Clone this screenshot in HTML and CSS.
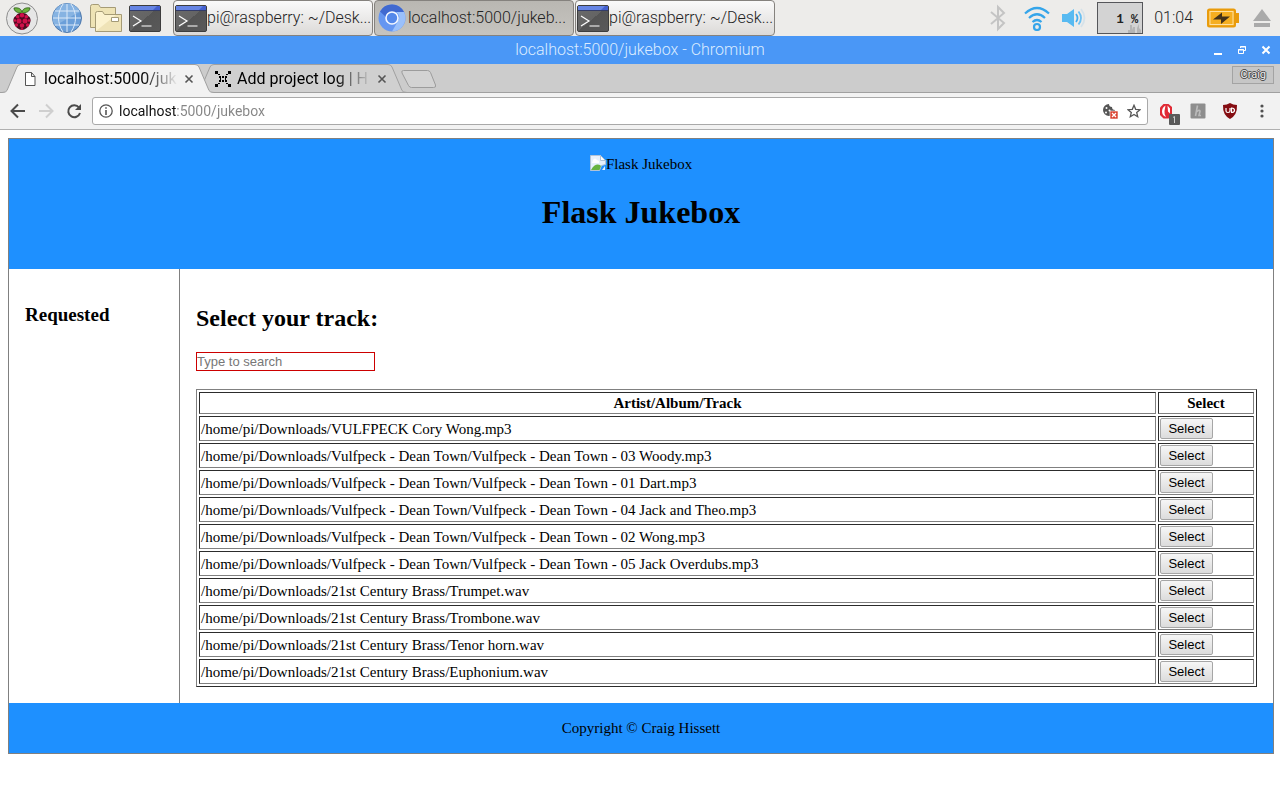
FILE: index.html
```html
<!DOCTYPE html>
<html lang="en">
<head>
<meta charset="utf-8">
<title>Flask Jukebox</title>
<link rel="stylesheet" href="styles.css">
</head>
<body>
<svg class="defs" aria-hidden="true">
  <defs>
    <linearGradient id="shine" x1="0" y1="0" x2="1" y2="1">
      <stop offset="0" stop-color="#6b6b6b"/><stop offset=".5" stop-color="#646464"/><stop offset=".5" stop-color="#545454"/><stop offset="1" stop-color="#595959"/>
    </linearGradient>
    <symbol id="terminal" viewBox="0 0 32 28">
      <rect x=".5" y="1.500" width="31" height="26" rx="1.500" fill="url(#shine)" stroke="#3d3d3d"/>
      <path d="M1 2h30v4H1z" fill="#4460cf"/><path d="M1 2h27l-4 4H1z" fill="#6685e4"/>
      <path d="M1 6.500h30" stroke="#333c68"/>
      <path d="M4 12l8 5-8 5M12.500 22h10" fill="none" stroke="#fff" stroke-width="1.200"/>
    </symbol>
    <symbol id="cross" viewBox="0 0 10 10"><path d="M1.500 1.500l7 7M8.500 1.500l-7 7" stroke="currentColor" stroke-width="1.600"/></symbol>
  </defs>
</svg>

<div class="taskbar">
  <nav class="launchers" aria-label="Launchers">
    <button class="launcher menu" aria-label="Menu">
      <svg width="34" height="34" viewBox="0 0 34 34">
        <circle cx="17" cy="17.500" r="15.500" fill="#e6e6e6" stroke="#8e8e8e"/>
        <path d="M16.500 12C12 12 9 10 9 7c3-.6 7 0 8 4 1-4 5-4.600 8-4 0 3-3 5-8.500 5z" fill="#6cb33e" stroke="#2d5a1b" stroke-width=".8"/>
        <path d="M17 12c4 0 5 1 6 3 3 1 3 5 2 7-1 4-5 7-8 7s-7-3-8-7c-1-2-1-6 2-7 1-2 2-3 6-3z" fill="#4e0b20"/>
        <g fill="#d0114b"><circle cx="17" cy="14.200" r="2.200"/><circle cx="12.700" cy="15.700" r="1.800"/><circle cx="21.300" cy="15.700" r="1.800"/><circle cx="14" cy="20" r="2.500"/><circle cx="20" cy="20" r="2.500"/><circle cx="10" cy="19.500" r="1.300"/><circle cx="24" cy="19.500" r="1.300"/><circle cx="11.500" cy="24" r="1.700"/><circle cx="22.500" cy="24" r="1.700"/><circle cx="17" cy="24.500" r="2.200"/><circle cx="17" cy="28" r="1.100"/></g>
      </svg>
    </button>
    <button class="launcher" aria-label="Web browser">
      <svg width="32" height="32" viewBox="0 0 32 32">
        <circle cx="16" cy="16" r="14.500" fill="#6b9fd9" stroke="#5079ab"/>
        <path d="M5 7A14 14 0 0 1 29 10C22 13 14 18 4 24A14 14 0 0 1 5 7z" fill="#86b3e2"/>
        <path d="M16 2v28M2 16h28M4 9h24M4 23h24M12 2c-6 9-6 19 0 28M20 2c6 9 6 19 0 28" fill="none" stroke="#dbe9f8"/>
      </svg>
    </button>
    <button class="launcher" aria-label="File manager">
      <svg width="32" height="30" viewBox="0 0 32 30">
        <path d="M.5 24.500V3.500q0-2 2-2h6l2 3h15v20z" fill="#eee3b5" stroke="#a59b76"/>
        <path d="M5.500 28.500v-18q0-2 2-2h5l2 3h17v17z" fill="#fbf2cf" stroke="#a59b76"/>
        <path d="M6 28l20-16h5v16z" fill="#efe3b7"/>
        <path d="M21.500 14.500h7v4h-7z" fill="#fff" stroke="#a39a77"/>
      </svg>
    </button>
    <button class="launcher" aria-label="Terminal"><svg width="32" height="28"><use href="#terminal"/></svg></button>
  </nav>
  <div class="tasks">
    <button class="task"><svg width="32" height="28"><use href="#terminal"/></svg><span>pi@raspberry: ~/Desk...</span></button>
    <button class="task current">
      <svg width="32" height="30" viewBox="0 0 32 30">
        <circle cx="16" cy="15" r="13.500" fill="#6596f1"/>
        <path d="M4 8.500A13.500 13.500 0 0 1 28 9H16a6 6 0 0 0-6 5z" fill="#4069d0"/>
        <path d="M28 9a13.500 13.500 0 0 1-12 19.500l6-10.500a6 6 0 0 0-2-9z" fill="#9ac0fb"/>
        <circle cx="16" cy="15" r="6" fill="#5488ea" stroke="#f5f8ff" stroke-width="1.600"/>
      </svg><span>localhost:5000/jukeb...</span>
    </button>
    <button class="task"><svg width="32" height="28"><use href="#terminal"/></svg><span>pi@raspberry: ~/Desk...</span></button>
  </div>
  <div class="tray">
    <svg class="bluetooth" width="18" height="28" viewBox="0 0 18 28" fill="none" stroke="#c4c4c4" stroke-width="2"><path d="M2 8l13 11-6 6V3l6 6L2 20"/></svg>
    <svg width="28" height="26" viewBox="0 0 28 26" fill="none" stroke="#35a5ea" stroke-width="2.200"><path d="M2 8.500q12-11 24 0M6 13q8-7.500 16 0M9.500 17q4.500-4 9 0"/><circle cx="14" cy="22" r="3"/></svg>
    <svg class="volume" width="26" height="22" viewBox="0 0 26 22" fill="none" stroke-width="1.800"><path d="M2 7h5l7-5v18l-7-5H2z" fill="#58baf1"/><path d="M16 7q3 4 0 8" stroke="#43adef"/><path d="M18.500 4.500q5 6.500 0 13" stroke="#6bc0f3"/><path d="M21 2q7 9 0 18" stroke="#d5e2ea"/></svg>
    <div class="cpu"><svg width="14" height="10" viewBox="0 0 14 10"><path d="M0 10V7h2V2h2v5l1-3h2v6zM9 10V5l2-4v4l2 2v3z" fill="#b5b5b5"/></svg><span>1 %</span></div>
    <time class="clock">01:04</time>
    <svg width="32" height="20" viewBox="0 0 32 20"><rect x="1" y="1.500" width="27" height="17" rx="1.500" fill="#f5ae20" stroke="#e99b0b" stroke-width="2"/><path d="M29 5h3v10h-3z" fill="#e99b0b"/><rect x="3" y="3.500" width="23" height="13" fill="none" stroke="#ffe0a0"/><path d="M6 11.500l9-7v4h8l-9 7.500v-4.500z" fill="#443218"/></svg>
    <svg class="eject" width="18" height="18" viewBox="0 0 18 18" fill="#aaa"><path d="M9 0l9 12H0zM1 14h16v4H1z"/></svg>
  </div>
</div>

<div class="titlebar">
  <span class="window-title">localhost:5000/jukebox - Chromium</span>
  <div class="window-buttons">
    <button aria-label="Minimise"><svg width="10" height="10"><path d="M1 8h8v2H1z" fill="#fff"/></svg></button>
    <button aria-label="Restore"><svg width="10" height="10" fill="none" stroke="#fff"><path d="M3.500 3V1.500h5v4H7M3 2h6M1.500 4.500h5v4h-5zM1 5h6"/></svg></button>
    <button aria-label="Close"><svg width="10" height="10"><path d="M1.500 1.500l7 7M8.500 1.500l-7 7" stroke="#fff" stroke-width="2"/></svg></button>
  </div>
</div>

<div class="tabstrip">
  <div class="tab active">
    <svg class="tab-shape" viewBox="0 0 212 29"><path d="M0 28.500q4 0 5-2L15 3q1-2.500 4-2.500h174q3 0 4 2.500l10 23.500q1 2 5 2V29H0z" fill="#f2f2f2"/><path d="M0 28.500q4 0 5-2L15 3q1-2.500 4-2.500h174q3 0 4 2.500l10 23.500q1 2 5 2" fill="none" stroke="#a0a0a0"/></svg>
    <svg width="12" height="14" viewBox="0 0 12 14"><path d="M1.500.5h6l3.500 4v9H1.500zM7.500.5v4H11" fill="#fff" stroke="#555"/></svg>
    <span class="tab-title">localhost:5000/juk</span>
    <button class="tab-close" aria-label="Close tab"><svg width="10" height="10"><use href="#cross"/></svg></button>
  </div>
  <div class="tab">
    <svg class="tab-shape" viewBox="0 0 212 29"><path d="M0 28.500q4 0 5-2L15 3q1-2.500 4-2.500h174q3 0 4 2.500l10 23.500q1 2 5 2z" fill="#d0d0d0" stroke="#a0a0a0"/></svg>
    <svg width="16" height="16" viewBox="0 0 16 16"><path d="M0 0h3v3H0zM13 0h3v3h-3zM0 13h3v3H0zM13 13h3v3h-3zM3 3h2v1H3zM11 3h2v1h-2zM3 12h2v1H3zM11 12h2v1h-2zM4 5h2v2H4zM7 5h2v2H7zM10 5h2v2h-2zM4 9h2v2H4zM7 9h2v2H7zM10 9h2v2h-2zM5 7h1v2H5zM10 7h1v2h-1z"/></svg>
    <span class="tab-title">Add project log | H</span>
    <button class="tab-close" aria-label="Close tab"><svg width="10" height="10"><use href="#cross"/></svg></button>
  </div>
  <button class="new-tab" aria-label="New tab"><svg width="36" height="18"><path d="M2.500.5h24q2 0 3 2l5 12.500q1 2.500-2 2.500h-22q-2 0-3-2L1 3Q0 .5 2.500.5z" fill="#d3d3d3" stroke="#9c9c9c"/></svg></button>
  <button class="profile">Craig</button>
</div>

<div class="toolbar">
  <button aria-label="Back"><svg width="16" height="16" fill="none" stroke="#4b4b4b" stroke-width="2"><path d="M15 8H2M8 1.500L1.500 8 8 14.500"/></svg></button>
  <button aria-label="Forward" disabled><svg width="16" height="16" fill="none" stroke="#cfcfcf" stroke-width="2"><path d="M1 8h13M8 1.500L14.500 8 8 14.500"/></svg></button>
  <button aria-label="Reload"><svg width="16" height="16"><path d="M13 4.500A6 6 0 1 0 14 10" fill="none" stroke="#4b4b4b" stroke-width="2"/><path d="M15 1v6H9z" fill="#4b4b4b"/></svg></button>
  <div class="omnibox">
    <svg width="14" height="14"><circle cx="7" cy="7" r="6.200" fill="none" stroke="#555" stroke-width="1.300"/><path d="M6.200 3.200h1.600v1.600H6.200zM6.200 6h1.600v5H6.200z" fill="#555"/></svg>
    <input class="address" type="text" aria-label="Address" value="localhost:5000/jukebox" spellcheck="false">
    <button aria-label="Cookies blocked"><svg width="16" height="16"><path d="M7 1q0 3 3 3 0 3 3 3A6 6 0 1 1 7 1z" fill="#555"/><g fill="#fff"><circle cx="4.500" cy="5" r="1"/><circle cx="7.500" cy="7.500" r="1"/><circle cx="4" cy="9.500" r="1"/></g><rect x="8" y="8" width="8" height="8" fill="#d9422f" stroke="#fff" stroke-width=".6"/><path d="M10 10l4 4M14 10l-4 4" stroke="#fff" stroke-width="1.300"/></svg></button>
    <button aria-label="Bookmark"><svg width="14" height="14" viewBox="0 0 14 14"><path d="M7 1.300l1.700 4 4.300.4-3.300 2.800 1 4.200L7 10.500l-3.700 2.200 1-4.200L1 5.700l4.300-.4z" fill="none" stroke="#555" stroke-width="1.300"/></svg></button>
  </div>
  <div class="extensions">
    <button class="blocker" aria-label="Blocker"><svg width="22" height="22"><path d="M5.500 1h5L14 4v8l-3.500 3.500h-5L2 12V4.500z" fill="#e02a35"/><path d="M7.500 2.500q-3.500 2-3.500 6 0 4 4 5.500-2-3-1.500-6zM9.500 2.500l.5 6 2 2V5.500z" fill="#fff"/><rect x="11" y="11" width="11" height="11" rx="1" fill="#5a5a5a"/><path d="M15 14.500l1.500-1V20" fill="none" stroke="#ccc"/></svg></button>
    <button aria-label="Honey"><svg width="16" height="16"><rect width="15" height="15" x=".5" y=".5" rx="1" fill="#8e8e8e"/><path d="M7.500 2.500L5.500 13M6 9.500q4-4 4-1L9 12.500h2" fill="none" stroke="#bbb" stroke-width="1.600"/></svg></button>
    <button aria-label="uBlock"><svg width="16" height="16"><path d="M8 0q3 2 7 2 .5 10-7 14Q.5 12 1 2q4 0 7-2z" fill="#850d12"/><path d="M4 5v3q0 1.500 2 1.500T8 8V5M9.500 5v4.500q3 0 3-2.200T9.500 5z" fill="none" stroke="#fff" stroke-width="1.200"/></svg></button>
    <button class="more" aria-label="Browser menu"><svg width="4" height="14" fill="#505050"><circle cx="2" cy="2" r="1.600"/><circle cx="2" cy="7" r="1.600"/><circle cx="2" cy="12" r="1.600"/></svg></button>
  </div>
</div>

<div class="container">
  <header class="banner">
    <span class="logo"><svg width="16" height="16" viewBox="0 0 16 16"><path d="M.5.500h10l5 5v4l-4 1-2 5h-9z" fill="#e6f0fc" stroke="#b2c3d6"/><path d="M10.500.5v5h5z" fill="#fff" stroke="#b2c3d6"/><path d="M3 5q2-3 4 0l2 1v2H2z" fill="#fff"/><path d="M1 15q4-7 9-5l1 1-1.500 4z" fill="#67b33f"/><path d="M12 15l3-4v4z" fill="#e6f0fc"/></svg><span>Flask Jukebox</span></span>
    <h1>Flask Jukebox</h1>
  </header>
  <div class="columns">
    <aside class="requested"><h3>Requested</h3></aside>
    <main class="content">
      <h2>Select your track:</h2>
      <input class="search" type="text" placeholder="Type to search" aria-label="Type to search">
      <table class="tracks">
        <thead><tr><th>Artist/Album/Track</th><th class="pick">Select</th></tr></thead>
        <tbody>
          <tr><td>/home/pi/Downloads/VULFPECK Cory Wong.mp3</td><td><button class="select">Select</button></td></tr>
          <tr><td>/home/pi/Downloads/Vulfpeck - Dean Town/Vulfpeck - Dean Town - 03 Woody.mp3</td><td><button class="select">Select</button></td></tr>
          <tr><td>/home/pi/Downloads/Vulfpeck - Dean Town/Vulfpeck - Dean Town - 01 Dart.mp3</td><td><button class="select">Select</button></td></tr>
          <tr><td>/home/pi/Downloads/Vulfpeck - Dean Town/Vulfpeck - Dean Town - 04 Jack and Theo.mp3</td><td><button class="select">Select</button></td></tr>
          <tr><td>/home/pi/Downloads/Vulfpeck - Dean Town/Vulfpeck - Dean Town - 02 Wong.mp3</td><td><button class="select">Select</button></td></tr>
          <tr><td>/home/pi/Downloads/Vulfpeck - Dean Town/Vulfpeck - Dean Town - 05 Jack Overdubs.mp3</td><td><button class="select">Select</button></td></tr>
          <tr><td>/home/pi/Downloads/21st Century Brass/Trumpet.wav</td><td><button class="select">Select</button></td></tr>
          <tr><td>/home/pi/Downloads/21st Century Brass/Trombone.wav</td><td><button class="select">Select</button></td></tr>
          <tr><td>/home/pi/Downloads/21st Century Brass/Tenor horn.wav</td><td><button class="select">Select</button></td></tr>
          <tr><td>/home/pi/Downloads/21st Century Brass/Euphonium.wav</td><td><button class="select">Select</button></td></tr>
        </tbody>
      </table>
    </main>
  </div>
  <footer class="footer">Copyright © Craig Hissett</footer>
</div>
</body>
</html>
```
FILE: styles.css
```css
* { box-sizing: border-box; }
body {
  margin: 0;
  background: #fff;
  color: #000;
  font: 15px/18px "Liberation Serif", serif;
}
button {
  margin: 0;
  padding: 0;
  border: 0;
  background: none;
  color: inherit;
  font: inherit;
}
svg { display: block; flex: none; }
.defs { position: absolute; width: 0; height: 0; }

/* Desktop panel */
.taskbar {
  display: flex;
  align-items: center;
  height: 36px;
  padding: 0 9px 0 5px;
  background: #edecea;
  font: 300 16px/20px Roboto, sans-serif;
}
.launchers { display: flex; align-items: center; gap: 7px; }
.menu { margin-right: 5px; }
.tasks { display: flex; gap: 1px; margin-left: 12px; }
.task {
  display: flex;
  align-items: center;
  width: 200px;
  height: 36px;
  padding: 0 1px;
  border: 1px solid #85827e;
  border-radius: 4px;
  background: linear-gradient(#fafafa, #dcdad8);
  color: #222;
  white-space: nowrap;
}
.task.current { background: linear-gradient(#b9b7b2, #c6c4bf); }
.tray { display: flex; align-items: center; gap: 11px; margin-left: auto; color: #222; }
.bluetooth { margin-right: 5px; }
.volume { margin-left: -2px; }
.cpu {
  position: relative;
  width: 46px;
  height: 32px;
  padding: 8px 4px 0 0;
  border: 1px solid #55565a;
  background: #d3d3d3;
  font: bold 12px/18px "Liberation Mono", monospace;
  text-align: right;
}
.cpu svg { position: absolute; right: 0; bottom: 0; }
.cpu span { position: relative; }
.clock { margin-right: 3px; }
.eject { margin-left: 3px; }

/* Window frame */
.titlebar {
  display: grid;
  grid-template-columns: 1fr auto 1fr;
  align-items: center;
  height: 28px;
  padding: 0 9px;
  background: #4a97f6;
  color: #dcecff;
  font: 300 16px/20px Roboto, sans-serif;
}
.window-title { grid-column: 2; }
.window-buttons { display: flex; justify-content: flex-end; gap: 14px; }

.tabstrip {
  display: flex;
  height: 29px;
  padding: 0 6px 0 2px;
  background: #ccc;
  box-shadow: inset 0 -1px #a0a0a0;
  font: 16px/20px Roboto, sans-serif;
}
.tab {
  position: relative;
  display: flex;
  align-items: center;
  width: 212px;
  margin-right: -19px;
  padding: 0 20px;
  isolation: isolate;
}
.tab.active { z-index: 1; padding-left: 22px; }
.tab-shape { position: absolute; inset: 0; z-index: -1; width: 100%; height: 100%; }
.tab-title {
  flex: 1;
  margin: 0 6px;
  white-space: nowrap;
  mask-image: linear-gradient(to left, transparent, #000 36px);
}
.active .tab-title { margin-left: 8px; }
.tab-close { color: #555; }
.new-tab { align-self: center; margin-left: 13px; }
.profile {
  align-self: flex-start;
  height: 18px;
  margin: 2px 0 0 auto;
  padding: 0 7px;
  border: 1px solid #a3a3a3;
  background: #c6c6c6;
  color: #eee;
  font: 11px/16px Roboto, sans-serif;
  text-shadow: 1px 0 #444, -1px 0 #444, 0 1px #444, 0 -1px #444;
}

.toolbar {
  display: flex;
  align-items: center;
  gap: 12px;
  height: 37px;
  padding: 0 16px 0 10px;
  border-bottom: 1px solid #b0b0b0;
  background: #f2f2f2;
}
.omnibox {
  display: flex;
  flex: 1;
  align-items: center;
  gap: 6px;
  height: 28px;
  margin-left: -2px;
  padding: 0 6px;
  border: 1px solid #a9a9a9;
  border-radius: 3px;
  background: #fff;
}
.address {
  flex: 1;
  min-width: 0;
  padding: 0;
  border: 0;
  background: linear-gradient(to right, #111 58px, #858585 58px) text;
  color: transparent;
  font: 14px/20px Roboto, sans-serif;
}
.omnibox button + button { margin-left: 3px; }
.extensions { display: flex; align-items: center; gap: 16px; margin-left: -2px; }
.blocker { margin: 6px -6px 0 0; }
.more { margin-left: 6px; }

/* Jukebox page */
.container { margin: 8px 6px 8px 8px; border: 1px solid #808080; }
.banner, .footer { padding: 16px; background: #1e90ff; text-align: center; }
.logo { display: flex; justify-content: center; }
h1 { margin: 21px 0 23px; font-size: 32px; line-height: 36px; }
.columns { display: flex; }
.requested { width: 171px; padding: 16px; border-right: 1px solid #808080; }
.content { flex: 1; padding: 16px; }
h2 { margin: 20px 0; font-size: 24px; line-height: 27px; }
h3 { margin: 19px 0; font-size: 19px; line-height: 22px; }
.search {
  display: block;
  width: 179px;
  height: 19px;
  padding: 0;
  border: 1px solid #c00;
  background: #fff;
  font: 13px/17px "Liberation Sans", sans-serif;
}
.search::placeholder { color: #777; }
.tracks {
  width: 100%;
  margin-top: 18px;
  border: 1px solid;
  border-color: #808080 #2c2c2c #2c2c2c #808080;
  border-spacing: 2px;
}
.tracks th, .tracks td {
  padding: 1px;
  border: 1px solid;
  border-color: #2c2c2c #808080 #808080 #2c2c2c;
  text-align: left;
}
.tracks th { text-align: center; }
.tracks .pick { width: 96px; }
.select {
  display: block;
  width: 53px;
  height: 21px;
  border: 1px solid #a6a6a6;
  border-radius: 2px;
  background: linear-gradient(#f6f6f6, #dcdcdc);
  font: 13px/17px "Liberation Sans", sans-serif;
}
```
